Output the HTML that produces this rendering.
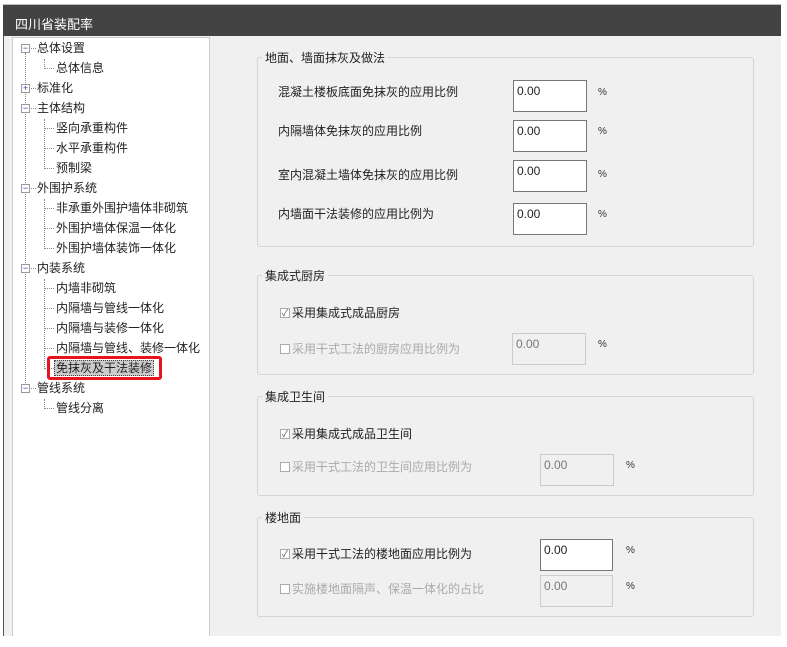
<!DOCTYPE html><html><head><meta charset="utf-8"><style>
*{margin:0;padding:0;box-sizing:border-box}
body{width:787px;height:646px;background:#fff;position:relative;overflow:hidden;font-family:"Liberation Sans","Noto Sans CJK SC",sans-serif;font-size:12px;color:#222}
.a{position:absolute}
.title{left:3px;top:4px;width:778px;height:32px;background:#434343;border-top:1px solid #bbb;color:#fff;font-size:13px;padding:9px 12px}
.main{left:3px;top:36px;width:778px;height:600px;background:#f0f0f0;border-left:1px solid #555}
.tree{left:12px;top:37px;width:198px;height:599px;background:#fff;border:1px solid #ccc;border-bottom:none}
.t{position:absolute;white-space:nowrap;font-size:12px;line-height:14px}
.pm{position:absolute;width:9px;height:9px;border:1px solid #999;background:#fff;font-size:9px;line-height:7px;text-align:center;color:#33a}
.vl{position:absolute;border-left:1px dotted #888}
.hl{position:absolute;border-top:1px dotted #888;height:0}
.g{position:absolute;border:1px solid #d4d4d4;border-radius:3px}
.gt{position:absolute;background:#f0f0f0;padding:0 3px;font-size:12px;color:#222}
.in{position:absolute;background:#fff;border:1px solid #777;font-size:12px;padding:3px 3px}
.dis{background:#f0f0f0;border:1px solid #ccc;color:#777}
.pc{position:absolute;font-size:10px;color:#333}
.cb{position:absolute;width:10px;height:10px;border:1px solid #aaa;background:#fff;font-size:9px;line-height:8px;text-align:center;color:#555}
.gray{color:#aaa}
.tt{position:absolute;left:0;top:1px;width:100%;height:100%}
</style></head><body>
<div class="a title">四川省装配率</div>
<div class="a main"></div>
<div class="a tree"></div>
<div class="tt">
<div class="vl" style="left:25px;top:52px;height:340px"></div>
<div class="vl" style="left:44px;top:58px;height:10px"></div>
<div class="vl" style="left:44px;top:118px;height:50px"></div>
<div class="vl" style="left:44px;top:198px;height:50px"></div>
<div class="vl" style="left:44px;top:278px;height:90px"></div>
<div class="vl" style="left:44px;top:398px;height:10px"></div>
<div class="hl" style="left:31px;top:47px;width:5px"></div>
<div class="hl" style="left:31px;top:87px;width:5px"></div>
<div class="hl" style="left:31px;top:107px;width:5px"></div>
<div class="hl" style="left:31px;top:187px;width:5px"></div>
<div class="hl" style="left:31px;top:267px;width:5px"></div>
<div class="hl" style="left:31px;top:387px;width:5px"></div>
<div class="hl" style="left:45px;top:67px;width:9px"></div>
<div class="hl" style="left:45px;top:127px;width:9px"></div>
<div class="hl" style="left:45px;top:147px;width:9px"></div>
<div class="hl" style="left:45px;top:167px;width:9px"></div>
<div class="hl" style="left:45px;top:207px;width:9px"></div>
<div class="hl" style="left:45px;top:227px;width:9px"></div>
<div class="hl" style="left:45px;top:247px;width:9px"></div>
<div class="hl" style="left:45px;top:287px;width:9px"></div>
<div class="hl" style="left:45px;top:307px;width:9px"></div>
<div class="hl" style="left:45px;top:327px;width:9px"></div>
<div class="hl" style="left:45px;top:347px;width:9px"></div>
<div class="hl" style="left:45px;top:367px;width:9px"></div>
<div class="hl" style="left:45px;top:407px;width:9px"></div>
<div class="pm" style="left:21px;top:43px">−</div>
<div class="pm" style="left:21px;top:83px">+</div>
<div class="pm" style="left:21px;top:103px">−</div>
<div class="pm" style="left:21px;top:183px">−</div>
<div class="pm" style="left:21px;top:263px">−</div>
<div class="pm" style="left:21px;top:383px">−</div>
<div class="t" style="left:37px;top:40px">总体设置</div>
<div class="t" style="left:56px;top:60px">总体信息</div>
<div class="t" style="left:37px;top:80px">标准化</div>
<div class="t" style="left:37px;top:100px">主体结构</div>
<div class="t" style="left:56px;top:120px">竖向承重构件</div>
<div class="t" style="left:56px;top:140px">水平承重构件</div>
<div class="t" style="left:56px;top:160px">预制梁</div>
<div class="t" style="left:37px;top:180px">外围护系统</div>
<div class="t" style="left:56px;top:200px">非承重外围护墙体非砌筑</div>
<div class="t" style="left:56px;top:220px">外围护墙体保温一体化</div>
<div class="t" style="left:56px;top:240px">外围护墙体装饰一体化</div>
<div class="t" style="left:37px;top:260px">内装系统</div>
<div class="t" style="left:56px;top:280px">内墙非砌筑</div>
<div class="t" style="left:56px;top:300px">内隔墙与管线一体化</div>
<div class="t" style="left:56px;top:320px">内隔墙与装修一体化</div>
<div class="t" style="left:56px;top:340px">内隔墙与管线、装修一体化</div>
<div class="a" style="left:47px;top:355px;width:115px;height:24px;border:3px solid #e8141c;border-radius:3px"></div>
<div class="t" style="left:54px;top:359px;background:#ccc;border:1px dotted #444;padding:0 1px">免抹灰及干法装修</div>
<div class="t" style="left:37px;top:380px">管线系统</div>
<div class="t" style="left:56px;top:400px">管线分离</div>
</div>

<div class="g" style="left:257px;top:57px;width:497px;height:190px"></div>
<div class="gt" style="left:262px;top:49px">地面、墙面抹灰及做法</div>
<div class="t" style="left:278px;top:85px">混凝土楼板底面免抹灰的应用比例</div>
<div class="t" style="left:278px;top:124px">内隔墙体免抹灰的应用比例</div>
<div class="t" style="left:278px;top:168px">室内混凝土墙体免抹灰的应用比例</div>
<div class="t" style="left:278px;top:207px">内墙面干法装修的应用比例为</div>
<div class="in" style="left:513px;top:80px;width:74px;height:32px">0.00</div>
<div class="in" style="left:513px;top:120px;width:74px;height:32px">0.00</div>
<div class="in" style="left:513px;top:160px;width:74px;height:32px">0.00</div>
<div class="in" style="left:513px;top:203px;width:74px;height:32px">0.00</div>
<div class="pc" style="left:598px;top:87px">%</div>
<div class="pc" style="left:598px;top:126px">%</div>
<div class="pc" style="left:598px;top:169px">%</div>
<div class="pc" style="left:598px;top:209px">%</div>
<div class="g" style="left:257px;top:275px;width:497px;height:100px"></div>
<div class="gt" style="left:262px;top:267px">集成式厨房</div>
<div class="cb" style="left:280px;top:308px">✓</div>
<div class="t" style="left:292px;top:306px">采用集成式成品厨房</div>
<div class="cb" style="left:280px;top:344px"></div>
<div class="t gray" style="left:292px;top:342px">采用干式工法的厨房应用比例为</div>
<div class="in dis" style="left:512px;top:333px;width:74px;height:32px">0.00</div>
<div class="pc" style="left:598px;top:339px">%</div>
<div class="g" style="left:257px;top:396px;width:497px;height:100px"></div>
<div class="gt" style="left:262px;top:388px">集成卫生间</div>
<div class="cb" style="left:280px;top:429px">✓</div>
<div class="t" style="left:292px;top:427px">采用集成式成品卫生间</div>
<div class="cb" style="left:280px;top:462px"></div>
<div class="t gray" style="left:292px;top:460px">采用干式工法的卫生间应用比例为</div>
<div class="in dis" style="left:540px;top:454px;width:74px;height:32px">0.00</div>
<div class="pc" style="left:626px;top:460px">%</div>
<div class="g" style="left:257px;top:517px;width:497px;height:100px"></div>
<div class="gt" style="left:262px;top:509px">楼地面</div>
<div class="cb" style="left:280px;top:549px">✓</div>
<div class="t" style="left:292px;top:547px">采用干式工法的楼地面应用比例为</div>
<div class="in" style="left:540px;top:539px;width:73px;height:32px">0.00</div>
<div class="pc" style="left:626px;top:545px">%</div>
<div class="cb" style="left:280px;top:584px"></div>
<div class="t gray" style="left:292px;top:582px">实施楼地面隔声、保温一体化的占比</div>
<div class="in dis" style="left:540px;top:575px;width:73px;height:32px">0.00</div>
<div class="pc" style="left:626px;top:581px">%</div>
</body></html>
